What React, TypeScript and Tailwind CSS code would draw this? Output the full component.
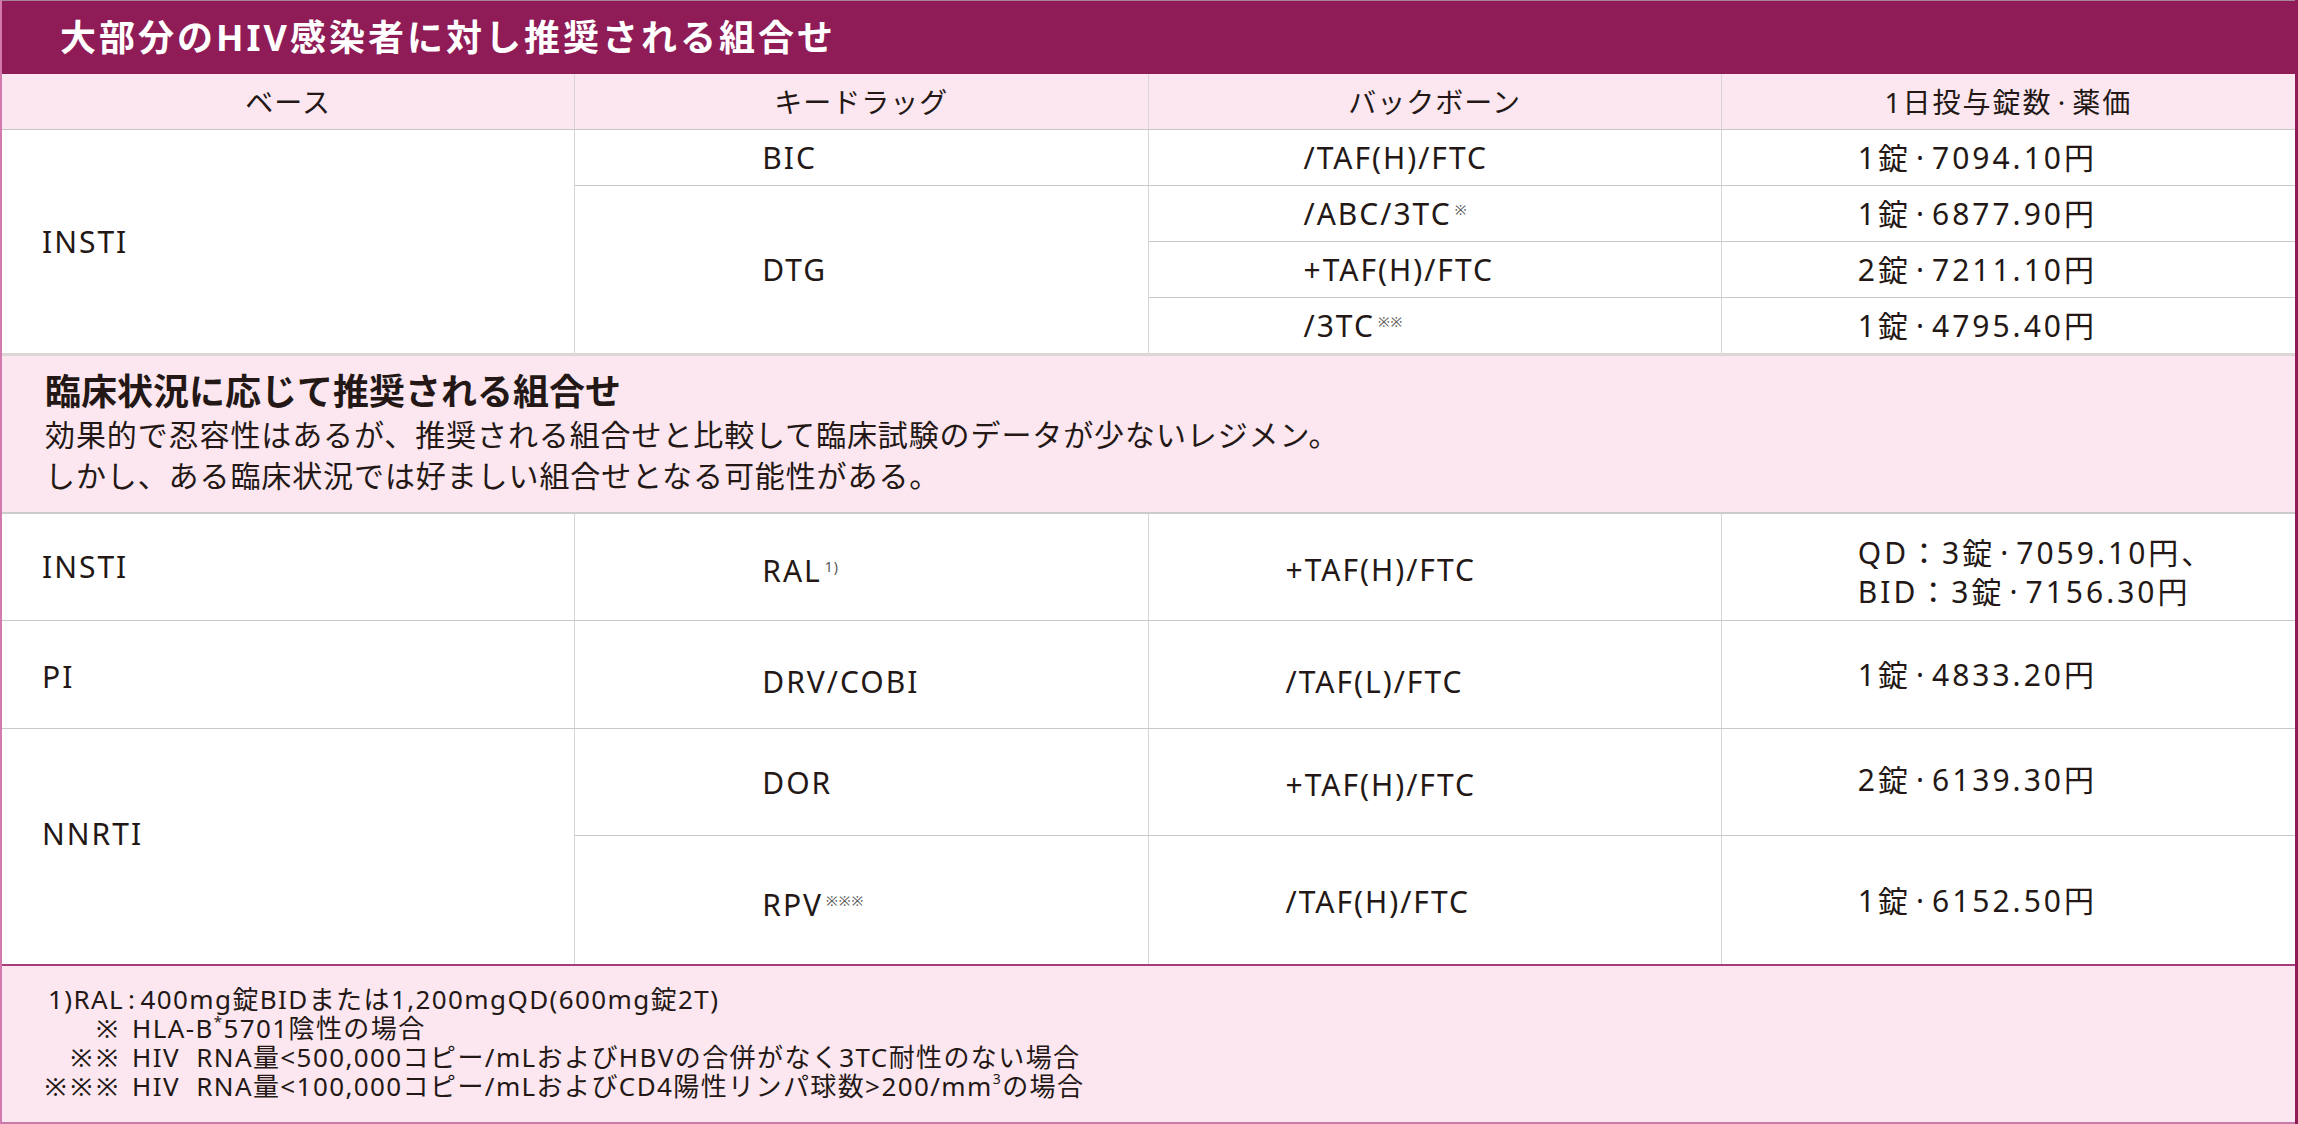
import React from "react";

function Sup({ children }: { children: React.ReactNode }) {
  return (
    <span className="relative top-[-10px] ml-[3px] text-[14px] tracking-[1px] leading-none text-[#555]">
      {children}
    </span>
  );
}

function Dot() {
  return <span className="mx-[5px]">·</span>;
}

export default function App() {
  const line = "border-[#c6cac6]";
  const vline = "border-r border-r-[#d6d6d6]";
  const body = "text-[30px] tracking-[2px] leading-none";
  const price = "tracking-[3px]";
  return (
    <div className="w-[2298px] h-[1124px] bg-white font-['Noto_Sans','Noto_Sans_CJK_JP',sans-serif] text-[#231815] overflow-hidden">
      <div className="flex flex-col h-full border-l-2 border-r-[3px] border-l-[#d27aae] border-r-[#8f1c57]">
        {/* Title */}
        <div className="h-[74px] shrink-0 bg-[#8f1c57] border-t border-t-[#a58398] flex items-center pl-[58px] text-white text-[36px] font-bold tracking-[3px] leading-none">
          大部分のHIV感染者に対し推奨される組合せ
        </div>

        {/* Header row */}
        <div className={`h-[56px] shrink-0 grid grid-cols-4 bg-[#fce6ef] border-b ${line} text-[28px] tracking-[1px] leading-none`}>
          <div className={`flex items-center justify-center ${vline}`}>ベース</div>
          <div className={`flex items-center justify-center ${vline}`}>キードラッグ</div>
          <div className={`flex items-center justify-center ${vline}`}>バックボーン</div>
          <div className="flex items-center justify-center tracking-[2px]">
            <span>1日投与錠数<Dot />薬価</span>
          </div>
        </div>

        {/* Section 1 */}
        <div className={`h-[223px] shrink-0 grid grid-cols-4 grid-rows-[56px_56px_56px_55px] ${body}`}>
          <div className={`col-start-1 row-start-1 row-span-4 flex items-center pl-[40px] ${vline}`}>INSTI</div>
          <div className={`col-start-2 row-start-1 flex items-center pl-[187px] border-b ${line} ${vline}`}>BIC</div>
          <div className={`col-start-2 row-start-2 row-span-3 flex items-center pl-[187px] ${vline}`}>DTG</div>

          <div className={`col-start-3 row-start-1 flex items-center pl-[155px] border-b ${line} ${vline}`}>/TAF(H)/FTC</div>
          <div className={`col-start-3 row-start-2 flex items-center pl-[155px] border-b ${line} ${vline}`}>
            <span>/ABC/3TC<Sup>※</Sup></span>
          </div>
          <div className={`col-start-3 row-start-3 flex items-center pl-[155px] border-b ${line} ${vline}`}>+TAF(H)/FTC</div>
          <div className={`col-start-3 row-start-4 flex items-center pl-[155px] ${vline}`}>
            <span>/3TC<Sup>※※</Sup></span>
          </div>

          <div className={`col-start-4 row-start-1 flex items-center pl-[136px] border-b ${line} ${price}`}>
            <span>1錠<Dot />7094.10円</span>
          </div>
          <div className={`col-start-4 row-start-2 flex items-center pl-[136px] border-b ${line} ${price}`}>
            <span>1錠<Dot />6877.90円</span>
          </div>
          <div className={`col-start-4 row-start-3 flex items-center pl-[136px] border-b ${line} ${price}`}>
            <span>2錠<Dot />7211.10円</span>
          </div>
          <div className={`col-start-4 row-start-4 flex items-center pl-[136px] ${price}`}>
            <span>1錠<Dot />4795.40円</span>
          </div>
        </div>

        {/* Section 2 heading */}
        <div className="h-[161px] shrink-0 bg-[#fce6ef] border-t-[3px] border-t-[#dcd6d6] border-b-2 border-b-[#cbcbcb] pl-[43px] pt-[14px]">
          <div className="text-[36px] font-bold leading-[44px]">臨床状況に応じて推奨される組合せ</div>
          <div className="text-[30px] leading-[41px] tracking-[0.9px]">
            効果的で忍容性はあるが、推奨される組合せと比較して臨床試験のデータが少ないレジメン。
          </div>
          <div className="text-[30px] leading-[41px] tracking-[0.9px]">
            しかし、ある臨床状況では好ましい組合せとなる可能性がある。
          </div>
        </div>

        {/* Section 2 rows */}
        <div className={`h-[450px] shrink-0 grid grid-cols-4 grid-rows-[107px_108px_107px_128px] ${body}`}>
          {/* Row INSTI */}
          <div className={`col-start-1 row-start-1 flex items-center pl-[40px] border-b ${line} ${vline}`}>INSTI</div>
          <div className={`col-start-2 row-start-1 flex items-center pl-[187px] pt-[8px] border-b ${line} ${vline}`}>
            <span>RAL<Sup>1)</Sup></span>
          </div>
          <div className={`col-start-3 row-start-1 flex items-center pl-[137px] pt-[6px] border-b ${line} ${vline}`}>+TAF(H)/FTC</div>
          <div className={`col-start-4 row-start-1 flex flex-col justify-center pl-[136px] pt-[10px] border-b ${line} leading-[39px] ${price}`}>
            <div>QD：3錠<Dot />7059.10円、</div>
            <div>BID：3錠<Dot />7156.30円</div>
          </div>

          {/* Row PI */}
          <div className={`col-start-1 row-start-2 flex items-center pl-[40px] pt-[4px] border-b ${line} ${vline}`}>PI</div>
          <div className={`col-start-2 row-start-2 flex items-center pl-[187px] pt-[14px] border-b ${line} ${vline}`}>DRV/COBI</div>
          <div className={`col-start-3 row-start-2 flex items-center pl-[137px] pt-[14px] border-b ${line} ${vline}`}>/TAF(L)/FTC</div>
          <div className={`col-start-4 row-start-2 flex items-center pl-[136px] border-b ${line} ${price}`}>
            <span>1錠<Dot />4833.20円</span>
          </div>

          {/* Rows NNRTI */}
          <div className={`col-start-1 row-start-3 row-span-2 flex items-center pl-[40px] pb-[26px] ${vline}`}>NNRTI</div>
          <div className={`col-start-2 row-start-3 flex items-center pl-[187px] pt-[2px] border-b ${line} ${vline}`}>DOR</div>
          <div className={`col-start-2 row-start-4 flex items-center pl-[187px] pt-[10px] ${vline}`}>
            <span>RPV<Sup>※※※</Sup></span>
          </div>
          <div className={`col-start-3 row-start-3 flex items-center pl-[137px] pt-[6px] border-b ${line} ${vline}`}>+TAF(H)/FTC</div>
          <div className={`col-start-3 row-start-4 flex items-center pl-[137px] pt-[4px] ${vline}`}>/TAF(H)/FTC</div>
          <div className={`col-start-4 row-start-3 flex items-center pl-[136px] pb-[4px] border-b ${line} ${price}`}>
            <span>2錠<Dot />6139.30円</span>
          </div>
          <div className={`col-start-4 row-start-4 flex items-center pl-[136px] pt-[2px] ${price}`}>
            <span>1錠<Dot />6152.50円</span>
          </div>
        </div>

        {/* Footer */}
        <div className="h-[160px] shrink-0 bg-[#fce6ef] border-t-2 border-t-[#a53d7c] border-b-2 border-b-[#c97aaa] pt-[19px] text-[26px] leading-[29px] tracking-[1.4px]">
          <div className="pl-[46px]">
            1)RAL<span className="mx-[4px]">:</span>400mg錠BIDまたは1,200mgQD(600mg錠2T)
          </div>
          <div className="flex">
            <span className="w-[120px] text-right tracking-[4px]">※</span>
            <span className="ml-[10px]">
              HLA-B<span className="align-top text-[15px] leading-[15px]">*</span>5701陰性の場合
            </span>
          </div>
          <div className="flex">
            <span className="w-[120px] text-right tracking-[4px]">※※</span>
            <span className="ml-[10px] whitespace-pre">HIV  RNA量&lt;500,000コピー/mLおよびHBVの合併がなく3TC耐性のない場合</span>
          </div>
          <div className="flex">
            <span className="w-[120px] pl-[40px] text-right tracking-[4px]">※※※</span>
            <span className="ml-[10px] whitespace-pre">
              HIV  RNA量&lt;100,000コピー/mLおよびCD4陽性リンパ球数&gt;200/mm<span className="align-top text-[14px] leading-[14px]">3</span>の場合
            </span>
          </div>
        </div>
      </div>
    </div>
  );
}
